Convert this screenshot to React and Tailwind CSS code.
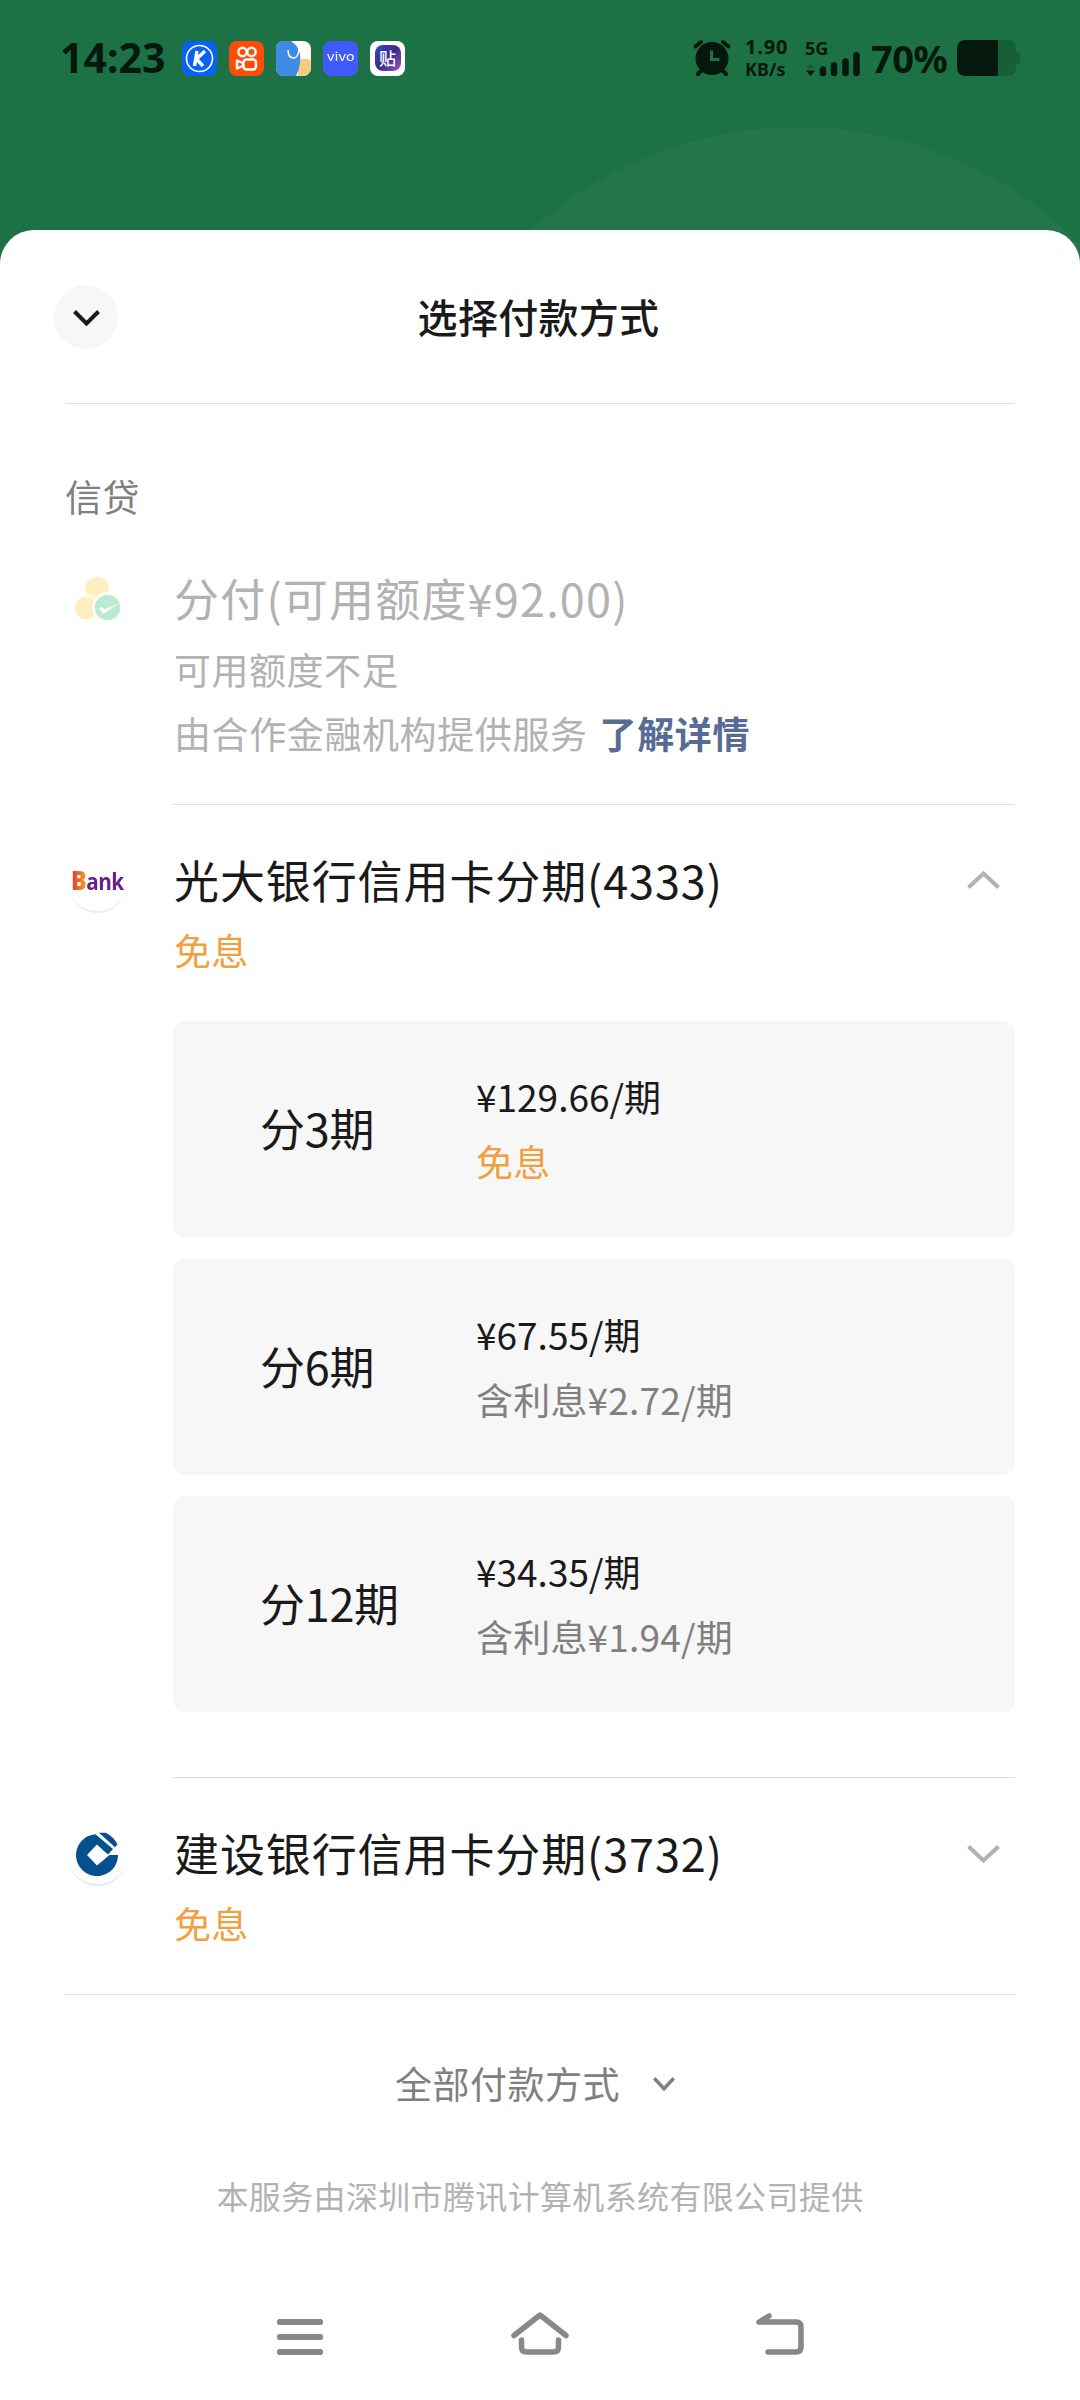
const plans = [
  { term: '分3期', price: '¥129.66/期', note: '免息', free: true },
  { term: '分6期', price: '¥67.55/期', note: '含利息¥2.72/期' },
  { term: '分12期', price: '¥34.35/期', note: '含利息¥1.94/期' },
];

function Chevron({ up, className, w = 35, h = 19, stroke = 4 }) {
  const s = stroke / 2 + 0.5;
  const d = up ? `M${s} ${h - s}L${w / 2} ${s}L${w - s} ${h - s}` : `M${s} ${s}L${w / 2} ${h - s}L${w - s} ${s}`;
  return (
    <svg width={w} height={h} viewBox={`0 0 ${w} ${h}`} fill="none" stroke="currentColor" strokeWidth={stroke} className={className}>
      <path d={d} />
    </svg>
  );
}

function AppIcons() {
  return (
    <div className="flex gap-3">
      <svg width="35" height="35" viewBox="0 0 35 35">
        <rect width="35" height="35" rx="8" fill="#0a62f5" />
        <circle cx="17.5" cy="17.5" r="13" fill="none" stroke="#fff" strokeWidth="1.6" />
        <path d="M15 10l-2.5 15M23 10l-8.5 8 6.5 7" fill="none" stroke="#fff" strokeWidth="3.4" />
      </svg>
      <svg width="35" height="35" viewBox="0 0 35 35">
        <rect width="35" height="35" rx="8" fill="#ff4d08" />
        <g fill="none" stroke="#fff" strokeWidth="2.4">
          <circle cx="13.5" cy="11" r="4.2" />
          <circle cx="22.5" cy="11" r="4.2" />
          <rect x="14.5" y="18.5" width="12.5" height="10" rx="3" />
          <path d="M14 22l-6-2.5v8l6-2.5z" strokeLinejoin="round" />
        </g>
      </svg>
      <svg width="35" height="35" viewBox="0 0 35 35">
        <defs>
          <clipPath id="tile">
            <rect width="35" height="35" rx="8" />
          </clipPath>
        </defs>
        <g clipPath="url(#tile)">
          <rect width="35" height="35" fill="#fff" />
          <path d="M22 35V20q5-4 13-1v16z" fill="#f8cb85" />
          <path d="M0 0h15q11 7 9 22-1 7-4 13H0z" fill="#3f8ae2" />
          <path d="M12 9q0 8 6 8 4 0 5-9" fill="none" stroke="#fff" strokeWidth="1.5" />
        </g>
      </svg>
      <div className="flex h-[35px] w-[35px] items-center justify-center rounded-lg bg-[#405bfd] pb-[1px] font-['Inter'] text-[11px] leading-none text-white">
        <span className="scale-x-[1.3]">vivo</span>
      </div>
      <div className="flex h-[35px] w-[35px] items-center justify-center rounded-lg bg-white">
        <div className="flex h-[26px] w-[26px] items-center justify-center rounded-lg bg-gradient-to-br from-[#2d4cc4] via-[#3b2a8c] to-[#a052c8] pb-[1px] text-[17px] leading-none font-medium text-white">
          贴
        </div>
      </div>
    </div>
  );
}

function StatusBar() {
  return (
    <div className="relative flex h-[116px] items-center justify-between pr-[60px] pl-[60px] text-[#04180e]">
      <div className="flex items-center gap-[14px]">
        <span className="w-[108px] pb-[1px] font-['Noto_Sans'] text-[41px] leading-none font-bold whitespace-nowrap">14:23</span>
        <AppIcons />
      </div>
      <div className="flex items-center font-['Noto_Sans'] font-bold">
        <svg width="38" height="38" viewBox="0 0 38 38">
          <g stroke="#04180e" strokeWidth="4" strokeLinecap="round">
            <path d="M2.5 7.5L8 3M35.5 7.5L30 3M8 32l-3 3M30 32l3 3" />
          </g>
          <circle cx="19" cy="19.5" r="16.5" fill="#04180e" />
          <path d="M18.5 11.5v9h8" fill="none" stroke="#1c7245" strokeWidth="3" />
        </svg>
        <div className="ml-[14px] w-[44px] leading-[23px] whitespace-nowrap">
          <div className="text-[20px] tracking-[0.8px]">1.90</div>
          <div className="text-[18px]">KB/s</div>
        </div>
        <div className="ml-[16px] w-[55px]">
          <div className="text-[18px] leading-[17px]">5G</div>
          <svg width="55" height="26" viewBox="0 0 55 26" className="-mt-[6px]">
            <path d="M1 19.5h9L5.5 25z" fill="#04180e" />
            <path d="M1 17.5h9l-4.5-5z" fill="#125c35" />
            <path d="M18 18.5V22M29 14.5V22M40.5 10.5V22M51.5 4.3V22" stroke="#04180e" strokeWidth="6.5" strokeLinecap="round" />
          </svg>
        </div>
        <span className="ml-[11px] w-[78px] pb-[1px] text-[38px] leading-none tracking-[-0.5px] whitespace-nowrap">70%</span>
        <svg width="63" height="36" viewBox="0 0 63 36" className="ml-[8px]">
          <path d="M41 0h9q9 0 9 9v3h1q3 0 3 3v6q0 3-3 3h-1v3q0 9-9 9h-9z" fill="#165f38" />
          <path d="M9 0h32v36H9q-9 0-9-9V9q0-9 9-9z" fill="#04180e" />
        </svg>
      </div>
    </div>
  );
}

function CreditIcon() {
  return (
    <svg width="48" height="48" viewBox="0 0 48 48">
      <circle cx="23" cy="13" r="12" fill="#ffeec0" />
      <circle cx="12" cy="32" r="12.5" fill="#ffeec0" stroke="#fff" strokeWidth="2.5" />
      <circle cx="33.5" cy="31.5" r="14" fill="#b9ebd0" stroke="#fff" strokeWidth="2.5" />
      <path d="M25 32l3-1 2.500 2.500L46 26.500 30.500 37q-1.500 1-2.500-.5z" fill="#fff" />
    </svg>
  );
}

function EverbrightIcon() {
  return (
    <div className="flex h-[59px] w-[59px] items-center justify-center rounded-full border-b-2 border-[#ececec] bg-white font-['Open_Sans'] text-[23px] leading-none font-bold text-[#6b1f8a]">
      <div className="-mt-[5px] flex scale-x-[0.9] items-baseline tracking-tight">
        <span className="bg-gradient-to-r from-[#e8232a] to-[#f39a2b] bg-clip-text text-[26px] font-extrabold text-transparent">B</span>
        <span>ank</span>
      </div>
    </div>
  );
}

function CcbIcon() {
  return (
    <div className="flex h-[59px] w-[59px] items-center justify-center rounded-full border-b-2 border-[#e4e9f2] bg-white pb-1">
      <svg width="43" height="44" viewBox="0 0 43 44" fill="#05518f">
        <path d="M19.5 2.2A21 21 0 1 0 42 23H33.5L21 33.5 11 23 21 12.5 28.5 19.5 32 22.5 37 17z" />
        <path d="M23 .8h6.5Q37.5 4.5 41.5 12.5L39 15.2z" />
      </svg>
    </div>
  );
}

function BankRow({ icon, name, open }) {
  return (
    <div className="flex h-[216px] pt-[49px]">
      <div className="w-[109px] pl-[3px]">{icon}</div>
      <div className="flex-1">
        <div className="h-[50px] text-[45px] leading-[51px] tracking-[0.9px]">{name}</div>
        <div className="mt-[20px] text-[37px] leading-[52px] tracking-[0.3px] text-[#f1a03f]">免息</div>
      </div>
      <Chevron up={open} className="mt-[17px] mr-[14px] text-[#b2b2b2]" />
    </div>
  );
}

function PlanCard({ plan }) {
  return (
    <div className="flex h-[216px] rounded-xl bg-[#f7f7f7] pl-[87px]">
      <div className="w-[216px] pt-[78px] text-[45px] leading-[58px] tracking-[-0.3px]">{plan.term}</div>
      <div className="pt-[50px] text-[37px] leading-[50px]">
        <div>{plan.price}</div>
        <div className={`mt-[15px] tracking-[0.2px] ${plan.free ? 'text-[#f1a03f]' : 'text-[#808080]'}`}>{plan.note}</div>
      </div>
    </div>
  );
}

function NavBar() {
  return (
    <div className="flex h-[89px] items-start justify-between pr-[276px] pl-[277px] text-[#888]">
      <svg width="46" height="44" viewBox="0 0 46 44" fill="currentColor">
        <rect y="8" width="46" height="6" rx="2.5" />
        <rect y="23" width="46" height="6" rx="2.5" />
        <rect y="38" width="46" height="6" rx="2.5" />
      </svg>
      <svg width="58" height="45" viewBox="0 0 58 45" fill="none" stroke="currentColor" strokeWidth="5.5" strokeLinecap="round" strokeLinejoin="round">
        <path d="M3 24.5L29 4l26 20.5M10.5 29v7q0 5 5 5h27q5 0 5-5v-7" />
      </svg>
      <svg width="48" height="45" viewBox="0 0 48 45" fill="none" stroke="currentColor" strokeWidth="5.5" strokeLinecap="round" strokeLinejoin="round">
        <path d="M13 5L3 11h37q5 0 5 5v20q0 5-5 5H12" />
      </svg>
    </div>
  );
}

export default function App() {
  return (
    <div className="flex h-[2400px] w-[1080px] flex-col overflow-hidden bg-[#1c7245] font-['Noto_Sans_CJK_SC',sans-serif] text-[#1a1a1a]">
      <header className="relative h-[230px]">
        <div className="absolute top-[127px] left-[401px] h-[794px] w-[794px] rounded-full bg-[#24754c]" />
        <StatusBar />
      </header>

      <main className="relative flex flex-1 flex-col rounded-t-[34px] bg-white">
        <div className="mx-[65px] grid h-[174px] grid-cols-3 items-center border-b border-[#dedede]">
          <button className="-ml-[11px] flex h-16 w-16 items-center justify-center rounded-full bg-[#f7f7f7] pt-[2px]">
            <Chevron w={29} h={17} stroke={4} />
          </button>
          <h1 className="-ml-[3px] pb-[2px] text-center text-[40px] font-medium tracking-[0.3px] whitespace-nowrap">选择付款方式</h1>
        </div>

        <section className="mx-[65px]">
          <div className="pt-[66px] text-[37px] leading-[52px] tracking-[0.5px] text-[#808080]">信贷</div>
          <div className="mt-[48px] flex h-[235px] text-[#b2b2b2]">
            <div className="w-[108px] pt-[6px] pl-[9px]">
              <CreditIcon />
            </div>
            <div className="flex-1 border-b border-[#dedede] pl-px">
              <div className="text-[45px] leading-[55px] tracking-[1.2px]">分付(可用额度¥92.00)</div>
              <div className="mt-[18px] text-[37px] leading-[52px] tracking-[0.5px]">可用额度不足</div>
              <div className="mt-3 text-[37px] leading-[52px] tracking-[0.6px]">
                由合作金融机构提供服务<span className="ml-[12px] font-bold text-[#576b95]">了解详情</span>
              </div>
            </div>
          </div>

          <BankRow icon={<EverbrightIcon />} name="光大银行信用卡分期(4333)" open />
          <div className="ml-[108px] flex flex-col gap-[21.5px] border-b border-[#dedede] pb-[65px]">
            {plans.map((p) => (
              <PlanCard key={p.term} plan={p} />
            ))}
          </div>
          <div className="border-b border-[#dedede]">
            <BankRow icon={<CcbIcon />} name="建设银行信用卡分期(3732)" />
          </div>
        </section>

        <div className="mt-[62px] flex items-center justify-center gap-[32px] pr-[9px] text-[37px] leading-[52px] text-[#808080]">
          <span className="tracking-[0.5px]">全部付款方式</span>
          <Chevron w={24} h={15} stroke={3.5} className="mt-px" />
        </div>
        <div className="mt-[62px] text-center text-[32px] leading-[48px] tracking-[0.35px] text-[#b2b2b2]">本服务由深圳市腾讯计算机系统有限公司提供</div>
        <div className="mt-auto">
          <NavBar />
        </div>
      </main>
    </div>
  );
}
